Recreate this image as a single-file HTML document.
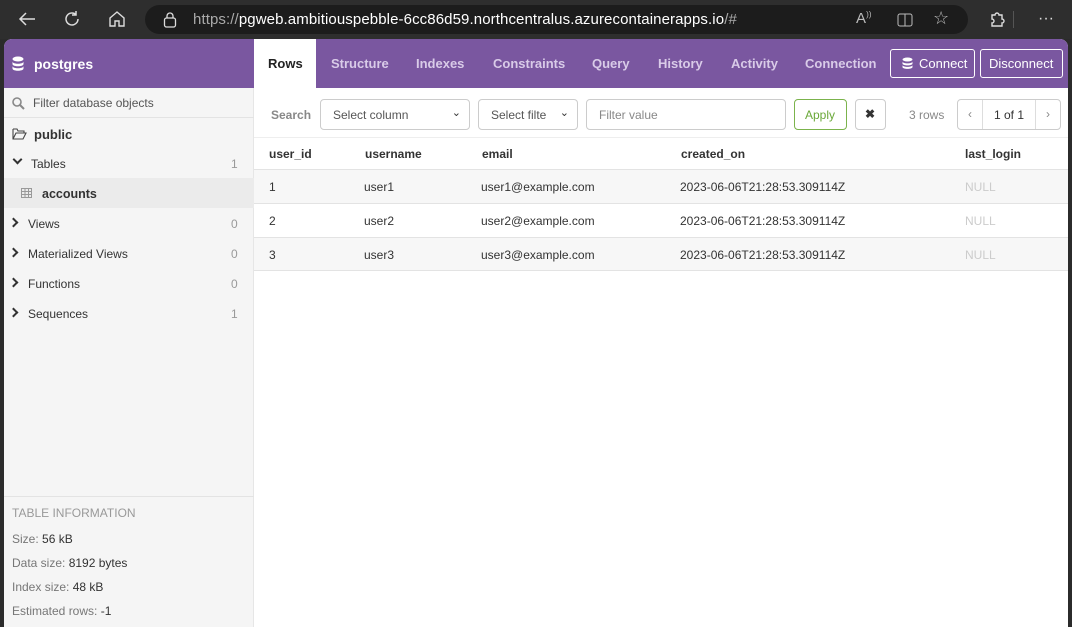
<!DOCTYPE html>
<html><head><style>
*{box-sizing:border-box;margin:0;padding:0}
body{width:1072px;height:627px;overflow:hidden;background:#2b2b2b;font-family:"Liberation Sans",sans-serif;position:relative}
.bar{position:absolute;left:0;top:0;width:1072px;height:39px;background:#2e2e2e}
.url{position:absolute;left:145px;top:5px;width:823px;height:29px;border-radius:15px;background:#1c1c1c}
.url span{position:absolute;left:48px;top:6px;font-size:15px;color:#fff;letter-spacing:.1px}
.win{position:absolute;left:4px;top:39px;width:1064px;height:588px;background:#fff;border-radius:8px 8px 0 0;overflow:hidden}
.hdr{position:absolute;left:0;top:0;width:1064px;height:49px;background:#7a57a0}
.side{position:absolute;left:0;top:49px;width:250px;height:539px;background:#f5f5f5;border-right:1px solid #e6e6e6}
.abs{position:absolute}
.tab{position:absolute;top:17px;font-size:13px;font-weight:bold;color:#d9cbe8}
.btn{position:absolute;top:10px;height:29px;border:1px solid #fff;border-radius:3px;color:#fff;font-size:13px;padding:6px 8px;white-space:nowrap}
.si{position:absolute;left:0;width:250px;height:30px;font-size:12px;color:#333}
.si .t{position:absolute;left:24px;top:8px}
.si .n{position:absolute;left:227px;top:8px;color:#999}
.chev{position:absolute;left:8px;top:10px;width:7px;height:7px;border-right:2px solid #333;border-bottom:2px solid #333}
.inp{position:absolute;top:60px;height:31px;border:1px solid #ccc;border-radius:4px;font-size:12px;color:#555;padding:8px 12px;background:#fff}
.th{position:absolute;top:108px;font-size:12px;font-weight:bold;color:#333}
.row{position:absolute;left:250px;width:814px;height:34px;border-top:1px solid #e3e3e3;font-size:12px;color:#333}
.row span{position:absolute;top:10px}
.info{font-size:12px;color:#777;position:absolute;left:8px}
.info b{font-weight:normal;color:#333}
</style></head><body>
<div class="bar">
<svg class="abs" style="left:18px;top:11px" width="18" height="16"><path d="M17 8H2M8 2L2 8l6 6" stroke="#ddd" stroke-width="1.5" fill="none"/></svg>
<svg class="abs" style="left:63px;top:10px" width="18" height="18"><path d="M15 9a6 6 0 1 1-2-4.5M13 1v4h-4" stroke="#ddd" stroke-width="1.5" fill="none"/></svg>
<svg class="abs" style="left:108px;top:10px" width="18" height="18"><path d="M2 8l7-6 7 6v8h-5v-5h-4v5H2z" stroke="#ddd" stroke-width="1.4" fill="none"/></svg>
<div class="url"><svg class="abs" style="left:18px;top:7px" width="14" height="16"><rect x="1.5" y="6" width="11" height="9" rx="2" stroke="#ddd" fill="none" stroke-width="1.3"/><path d="M4 6V4a3 3 0 0 1 6 0v2" stroke="#ddd" fill="none" stroke-width="1.3"/></svg><span><span style="position:static;color:#aaa">https://</span>pgweb.ambitiouspebble-6cc86d59.northcentralus.azurecontainerapps.io<span style="position:static;color:#aaa">/#</span></span>
<span style="left:711px;top:5px;color:#bbb;font-size:15px">A<sup style="font-size:8px">))</sup></span>
<svg class="abs" style="left:752px;top:8px" width="16" height="14"><rect x="1" y="1" width="14" height="12" rx="2" stroke="#bbb" fill="none"/><path d="M8 1v12" stroke="#bbb"/></svg>
<span style="left:788px;top:3px;color:#bbb;font-size:18px">☆</span></div>
<svg class="abs" style="left:988px;top:10px" width="18" height="18"><path d="M4 5h3a2 2 0 0 1 4 0h3v4a2 2 0 0 1 0 4v3H4v-3a2 2 0 0 0 0-4z" stroke="#ddd" stroke-width="1.4" fill="none"/></svg>
<div class="abs" style="left:1013px;top:11px;width:1px;height:17px;background:#555"></div>
<span class="abs" style="left:1038px;top:10px;color:#ddd;font-size:16px">···</span>
</div>
<div class="win">
<div class="hdr">
<svg class="abs" style="left:8px;top:17px" width="12" height="15"><ellipse cx="6" cy="3" rx="5.5" ry="2.5" fill="#fff"/><path d="M.5 5.5c0 3 11 3 11 0v2.5c0 3-11 3-11 0zM.5 10c0 3 11 3 11 0v2.5c0 3-11 3-11 0z" fill="#fff"/></svg>
<div class="abs" style="left:30px;top:17px;color:#fff;font-weight:bold;font-size:14px">postgres</div>
<div class="abs" style="left:250px;top:0;width:62px;height:49px;background:#fff"></div>
<div class="tab" style="left:264px;color:#222">Rows</div>
<div class="tab" style="left:327px">Structure</div>
<div class="tab" style="left:412px">Indexes</div>
<div class="tab" style="left:489px">Constraints</div>
<div class="tab" style="left:588px">Query</div>
<div class="tab" style="left:654px">History</div>
<div class="tab" style="left:727px">Activity</div>
<div class="tab" style="left:801px">Connection</div>
<div class="btn" style="left:886px;width:85px;padding-left:11px"><svg style="vertical-align:-1px;margin-right:6px" width="11" height="12"><ellipse cx="5.5" cy="2.5" rx="5" ry="2" fill="#fff"/><path d="M.5 4.5c0 2.5 10 2.5 10 0v2c0 2.5-10 2.5-10 0zM.5 8c0 2.5 10 2.5 10 0v2c0 2.5-10 2.5-10 0z" fill="#fff"/></svg>Connect</div>
<div class="btn" style="left:976px;width:83px">Disconnect</div>
</div>
<div class="side">
<div class="abs" style="left:0;top:0;width:250px;height:30px;border-bottom:1px solid #e3e3e3"></div>
<svg class="abs" style="left:8px;top:9px" width="13" height="13"><circle cx="5" cy="5" r="4" stroke="#888" stroke-width="1.6" fill="none"/><path d="M8 8l4 4" stroke="#888" stroke-width="2"/></svg>
<div class="abs" style="left:29px;top:8px;font-size:12px;color:#555">Filter database objects</div>
<svg class="abs" style="left:8px;top:40px" width="15" height="12"><path d="M1 1h4l1 2h6v2M1 1v10h10l3-6H4L1 11" stroke="#444" fill="none" stroke-width="1.1"/></svg>
<div class="abs" style="left:30px;top:39px;font-size:13px;font-weight:bold;color:#333">public</div>
<div class="si" style="top:60px"><div class="chev" style="transform:rotate(45deg);top:8px;left:10px"></div><div class="t" style="left:27px;top:9px">Tables</div><div class="n" style="top:9px">1</div></div>
<div class="si" style="top:90px;background:#ebebeb"><svg class="abs" style="left:17px;top:10px" width="11" height="10"><rect x=".5" y=".5" width="10" height="9" fill="none" stroke="#999"/><path d="M.5 3.5h10M.5 6.5h10M4 .5v9M7.5 .5v9" stroke="#999"/></svg><div class="t" style="left:38px;top:9px;font-weight:bold;font-size:12.5px">accounts</div></div>
<div class="si" style="top:120px"><div class="chev" style="transform:rotate(-45deg);left:6px;top:11px"></div><div class="t" style="top:9px">Views</div><div class="n" style="top:9px">0</div></div>
<div class="si" style="top:150px"><div class="chev" style="transform:rotate(-45deg);left:6px;top:11px"></div><div class="t" style="top:9px">Materialized Views</div><div class="n" style="top:9px">0</div></div>
<div class="si" style="top:180px"><div class="chev" style="transform:rotate(-45deg);left:6px;top:11px"></div><div class="t" style="top:9px">Functions</div><div class="n" style="top:9px">0</div></div>
<div class="si" style="top:210px"><div class="chev" style="transform:rotate(-45deg);left:6px;top:11px"></div><div class="t" style="top:9px">Sequences</div><div class="n" style="top:9px">1</div></div>
<div class="abs" style="left:0;top:408px;width:250px;border-top:1px solid #e3e3e3"></div>
<div class="info" style="top:418px;color:#999">TABLE INFORMATION</div>
<div class="info" style="top:444px">Size: <b>56 kB</b></div>
<div class="info" style="top:468px">Data size: <b>8192 bytes</b></div>
<div class="info" style="top:492px">Index size: <b>48 kB</b></div>
<div class="info" style="top:516px">Estimated rows: <b>-1</b></div>
</div>
<div class="abs" style="left:267px;top:69px;font-size:12px;font-weight:bold;color:#888">Search</div>
<div class="inp" style="left:316px;width:150px">Select column<span style="position:absolute;right:8px;top:6px;font-size:11px;color:#333">⌄</span></div>
<div class="inp" style="left:474px;width:100px;overflow:hidden">Select filte<span style="position:absolute;right:8px;top:6px;font-size:11px;color:#333">⌄</span></div>
<div class="inp" style="left:582px;width:200px;color:#888">Filter value</div>
<div class="inp" style="left:790px;width:53px;border-color:#7bb34c;color:#6aa838;padding:8px 10px">Apply</div>
<div class="inp" style="left:851px;width:31px;padding:7px 9px;font-weight:bold;color:#333">✖</div>
<div class="abs" style="left:905px;top:69px;font-size:12px;color:#888">3 rows</div>
<div class="inp" style="left:953px;width:104px;padding:0"><div class="abs" style="left:0;top:0;width:25px;height:29px;border-right:1px solid #ddd;text-align:center;padding-top:7px;color:#888">‹</div><div class="abs" style="left:25px;top:8px;width:52px;text-align:center;color:#333">1 of 1</div><div class="abs" style="left:77px;top:0;width:25px;height:29px;border-left:1px solid #ddd;text-align:center;padding-top:7px;color:#888">›</div></div>
<div class="abs" style="left:250px;top:98px;width:814px;border-top:1px solid #eee"></div>
<div class="th" style="left:265px">user_id</div>
<div class="th" style="left:361px">username</div>
<div class="th" style="left:478px">email</div>
<div class="th" style="left:677px">created_on</div>
<div class="th" style="left:961px">last_login</div>
<div class="row" style="top:130px;background:#f7f7f7"><span style="left:15px">1</span><span style="left:110px">user1</span><span style="left:227px">user1@example.com</span><span style="left:426px">2023-06-06T21:28:53.309114Z</span><span style="left:711px;color:#ccc">NULL</span></div>
<div class="row" style="top:164px"><span style="left:15px">2</span><span style="left:110px">user2</span><span style="left:227px">user2@example.com</span><span style="left:426px">2023-06-06T21:28:53.309114Z</span><span style="left:711px;color:#ccc">NULL</span></div>
<div class="row" style="top:198px;background:#f7f7f7;border-bottom:1px solid #e3e3e3"><span style="left:15px">3</span><span style="left:110px">user3</span><span style="left:227px">user3@example.com</span><span style="left:426px">2023-06-06T21:28:53.309114Z</span><span style="left:711px;color:#ccc">NULL</span></div>
</div>
</body></html>
